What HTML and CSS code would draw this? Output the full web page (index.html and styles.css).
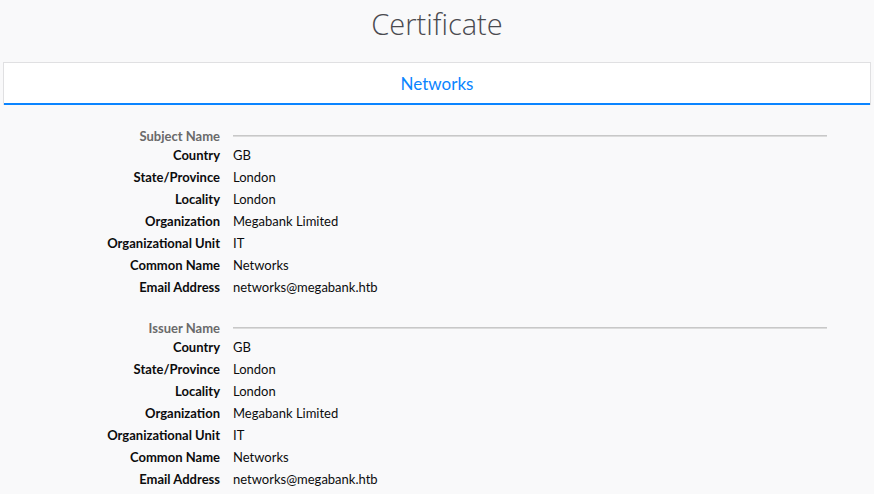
FILE: index.html
```html
<!DOCTYPE html>
<html>
<head>
<meta charset="utf-8">
<link rel="stylesheet" href="styles.css">
</head>
<body>
<h1 class="title">Certificate</h1>
<div class="tabs">
  <div class="tab selected">Networks</div>
</div>
<div class="info">
  <section class="group">
    <div class="head-label">Subject Name</div>
    <div class="head-line"></div>
    <div class="label">Country</div><div class="value">GB</div>
    <div class="label">State/Province</div><div class="value">London</div>
    <div class="label">Locality</div><div class="value">London</div>
    <div class="label">Organization</div><div class="value">Megabank Limited</div>
    <div class="label">Organizational Unit</div><div class="value">IT</div>
    <div class="label">Common Name</div><div class="value">Networks</div>
    <div class="label">Email Address</div><div class="value">networks@megabank.htb</div>
  </section>
  <section class="group">
    <div class="head-label">Issuer Name</div>
    <div class="head-line"></div>
    <div class="label">Country</div><div class="value">GB</div>
    <div class="label">State/Province</div><div class="value">London</div>
    <div class="label">Locality</div><div class="value">London</div>
    <div class="label">Organization</div><div class="value">Megabank Limited</div>
    <div class="label">Organizational Unit</div><div class="value">IT</div>
    <div class="label">Common Name</div><div class="value">Networks</div>
    <div class="label">Email Address</div><div class="value">networks@megabank.htb</div>
  </section>
</div>
</body>
</html>
```
FILE: styles.css
```css
html, body {
  margin: 0;
  padding: 0;
  background: #f9f9fa;
  font-family: Lato, "Open Sans", sans-serif;
  color: #0c0c0d;
  font-size: 13px;
  overflow: hidden;
}
.title {
  margin: 0;
  height: 62px;
  box-sizing: border-box;
  padding-top: 3px;
  text-align: center;
  font-family: "Open Sans", sans-serif;
  font-weight: 300;
  font-size: 29px;
  line-height: 42px;
  color: #4a4a4f;
}
.tabs {
  margin: 0 3px;
  background: #fff;
  border: 1px solid #e0e0e2;
  border-bottom: none;
  display: flex;
}
.tab {
  flex: 1;
  height: 40px;
  line-height: 42px;
  text-align: center;
  font-size: 17px;
  color: #0a84ff;
  border-bottom: 2px solid #0a84ff;
}
.info {
  padding-top: 22px;
}
.group {
  display: grid;
  grid-template-columns: 212px 1fr;
  column-gap: 13px;
  margin: 0 47px 21px 8px;
  grid-template-rows: 17px;
  grid-auto-rows: 22px;
  align-items: center;
}
.head-label {
  text-align: right;
  font-weight: 700;
  color: #6a6a6a;
}
.head-line {
  height: 1px;
  background: #c8c8c8;
  border-bottom: 1px solid #dcdcdc;
}
.label {
  text-align: right;
  font-weight: 700;
  white-space: nowrap;
}
.value {
  white-space: nowrap;
}
```
